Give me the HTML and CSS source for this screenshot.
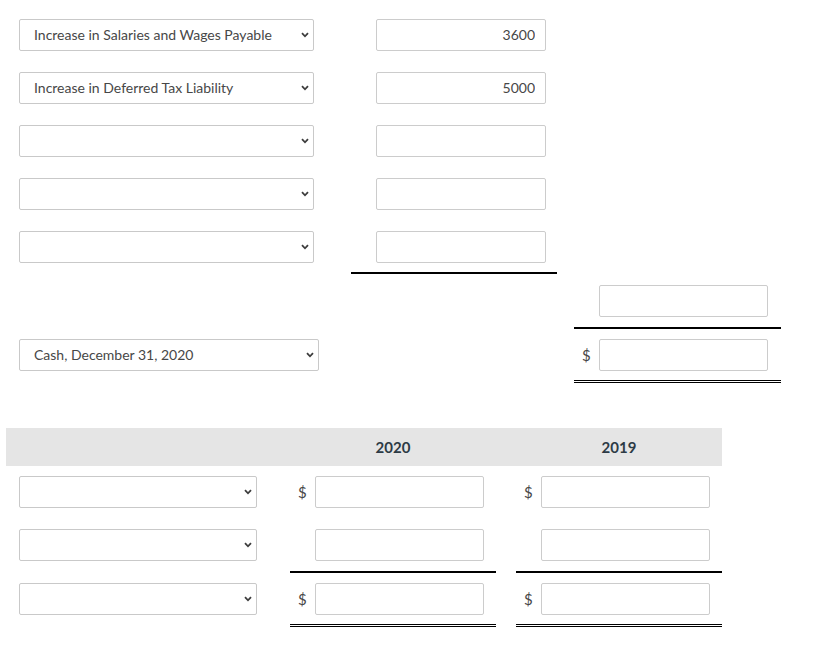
FILE: index.html
```html
<!DOCTYPE html>
<html>
<head>
<meta charset="utf-8">
<link rel="stylesheet" href="styles.css">
</head>
<body>
<div class="sheet">
  <section class="top">
    <div class="row r1">
      <div class="pick w295"><select class="sel"><option>Increase in Salaries and Wages Payable</option></select><svg class="chev" width="8" height="6" viewBox="0 0 8 6"><path d="M1 1.2 L4 4.3 L7 1.2" fill="none" stroke="#3d3d3d" stroke-width="1.8"/></svg></div>
      <div class="cell in"><input class="box b170 num" value="3600"></div>
    </div>
    <div class="row">
      <div class="pick w295"><select class="sel"><option>Increase in Deferred Tax Liability</option></select><svg class="chev" width="8" height="6" viewBox="0 0 8 6"><path d="M1 1.2 L4 4.3 L7 1.2" fill="none" stroke="#3d3d3d" stroke-width="1.8"/></svg></div>
      <div class="cell in"><input class="box b170 num" value="5000"></div>
    </div>
    <div class="row">
      <div class="pick w295"><select class="sel"><option></option></select><svg class="chev" width="8" height="6" viewBox="0 0 8 6"><path d="M1 1.2 L4 4.3 L7 1.2" fill="none" stroke="#3d3d3d" stroke-width="1.8"/></svg></div>
      <div class="cell in"><input class="box b170 num" value=""></div>
    </div>
    <div class="row">
      <div class="pick w295"><select class="sel"><option></option></select><svg class="chev" width="8" height="6" viewBox="0 0 8 6"><path d="M1 1.2 L4 4.3 L7 1.2" fill="none" stroke="#3d3d3d" stroke-width="1.8"/></svg></div>
      <div class="cell in"><input class="box b170 num" value=""></div>
    </div>
    <div class="row">
      <div class="pick w295"><select class="sel"><option></option></select><svg class="chev" width="8" height="6" viewBox="0 0 8 6"><path d="M1 1.2 L4 4.3 L7 1.2" fill="none" stroke="#3d3d3d" stroke-width="1.8"/></svg></div>
      <div class="cell in ul"><input class="box b170 num" value=""></div>
    </div>
    <div class="row r6">
      <div></div>
      <div></div>
      <div class="cell cur-cell ul ul10"><span class="cur"></span><input class="box b169 num" value=""></div>
    </div>
    <div class="row r7">
      <div class="pick w300"><select class="sel"><option>Cash, December 31, 2020</option></select><svg class="chev" width="8" height="6" viewBox="0 0 8 6"><path d="M1 1.2 L4 4.3 L7 1.2" fill="none" stroke="#3d3d3d" stroke-width="1.8"/></svg></div>
      <div></div>
      <div class="cell cur-cell dbl"><span class="cur">$</span><input class="box b169 num" value=""></div>
    </div>
  </section>

  <section class="bottom">
    <div class="head">
      <div></div>
      <div class="yr">2020</div>
      <div class="yr">2019</div>
    </div>
    <div class="brow b1">
      <div class="pick w238"><select class="sel"><option></option></select><svg class="chev" width="8" height="6" viewBox="0 0 8 6"><path d="M1 1.2 L4 4.3 L7 1.2" fill="none" stroke="#3d3d3d" stroke-width="1.8"/></svg></div>
      <div class="cell cur-cell"><span class="cur">$</span><input class="box b169 num" value=""></div>
      <div class="cell cur-cell"><span class="cur">$</span><input class="box b169 num" value=""></div>
    </div>
    <div class="brow">
      <div class="pick w238"><select class="sel"><option></option></select><svg class="chev" width="8" height="6" viewBox="0 0 8 6"><path d="M1 1.2 L4 4.3 L7 1.2" fill="none" stroke="#3d3d3d" stroke-width="1.8"/></svg></div>
      <div class="cell cur-cell ul ul10"><span class="cur"></span><input class="box b169 num" value=""></div>
      <div class="cell cur-cell ul ul10"><span class="cur"></span><input class="box b169 num" value=""></div>
    </div>
    <div class="brow b3">
      <div class="pick w238"><select class="sel"><option></option></select><svg class="chev" width="8" height="6" viewBox="0 0 8 6"><path d="M1 1.2 L4 4.3 L7 1.2" fill="none" stroke="#3d3d3d" stroke-width="1.8"/></svg></div>
      <div class="cell cur-cell dbl"><span class="cur">$</span><input class="box b169 num" value=""></div>
      <div class="cell cur-cell dbl"><span class="cur">$</span><input class="box b169 num" value=""></div>
    </div>
  </section>
</div>
</body>
</html>
```

FILE: styles.css
```css
html, body {
  margin: 0;
  padding: 0;
  background: #ffffff;
}

body {
  font-family: Lato, "Liberation Sans", sans-serif;
  color: #444444;
  font-size: 14px;
}

.sheet {
  width: 829px;
}

.top {
  padding: 19px 0 0 19px;
}

.row {
  display: grid;
  grid-template-columns: 315px 206px 207px;
  column-gap: 17px;
  align-items: start;
  margin-top: 21px;
}

.row.r1 {
  margin-top: 0;
}

.row.r6 {
  margin-top: 11px;
}

.row.r7 {
  margin-top: 10px;
}

.pick {
  position: relative;
  height: 32px;
}

.w295 { width: 295px; }
.w300 { width: 300px; }
.w238 { width: 238px; }

.sel {
  appearance: none;
  -webkit-appearance: none;
  width: 100%;
  height: 32px;
  box-sizing: border-box;
  border: 1px solid #c9c9c9;
  border-radius: 2px;
  background: #ffffff;
  padding: 0 24px 2px 14px;
  margin: 0;
  font-family: Lato, "Liberation Sans", sans-serif;
  font-size: 14px;
  color: #474747;
  outline: none;
}

.chev {
  position: absolute;
  right: 5px;
  top: 13px;
}

.cell {
  display: flex;
  align-items: center;
}

.cell.in {
  padding-left: 25px;
}

.box {
  height: 32px;
  box-sizing: border-box;
  border: 1px solid #cccccc;
  border-radius: 2px;
  margin: 0;
  padding: 0 10px 2px 10px;
  background: #ffffff;
  font-family: Lato, "Liberation Sans", sans-serif;
  font-size: 14px;
  color: #474747;
  outline: none;
}

.num {
  text-align: right;
}

.b170 { width: 170px; }
.b169 { width: 169px; }

.cur {
  width: 25px;
  padding-left: 8px;
  padding-bottom: 1px;
  box-sizing: border-box;
  font-size: 15px;
  color: #474747;
  flex: none;
}

.ul {
  padding-bottom: 9px;
  border-bottom: 2px solid #000000;
}

.ul.ul10 {
  padding-bottom: 10px;
}

.dbl {
  padding-bottom: 9px;
  border-bottom: 3px double #000000;
}

.bottom {
  margin-top: 45px;
  padding-left: 6px;
}

.head {
  width: 716px;
  height: 38px;
  background: #e5e5e5;
  display: grid;
  grid-template-columns: 264px 206px 206px;
  column-gap: 20px;
  align-items: center;
}

.yr {
  text-align: center;
  font-weight: 700;
  font-size: 15px;
  color: #2d3b45;
}

.brow {
  display: grid;
  grid-template-columns: 264px 206px 206px;
  column-gap: 20px;
  align-items: start;
  margin-top: 21px;
}

.brow .pick {
  margin-left: 13px;
}

.brow.b1 {
  margin-top: 10px;
}

.brow.b3 {
  margin-top: 10px;
}
```
